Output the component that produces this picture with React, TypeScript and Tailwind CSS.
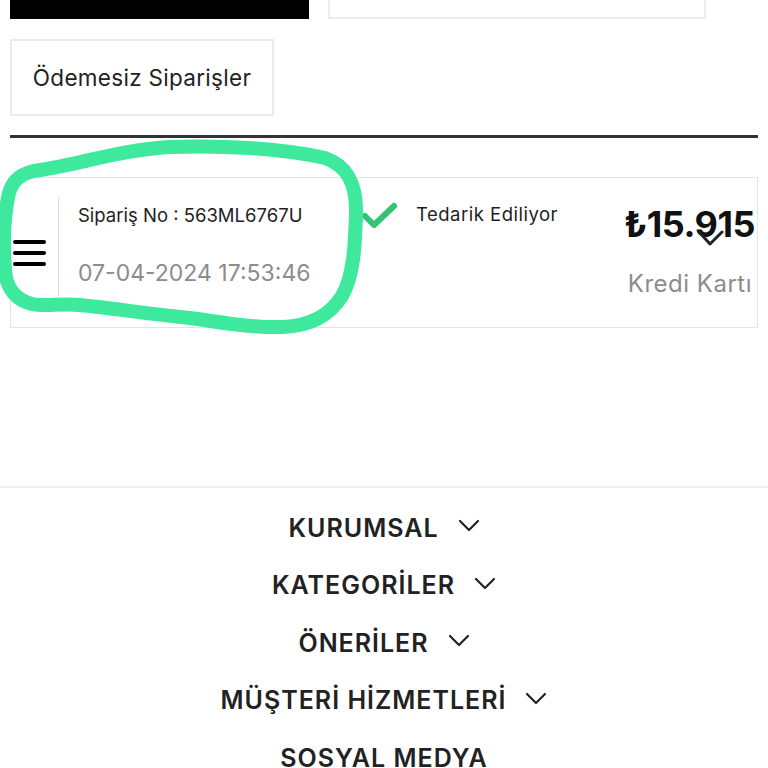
const footerLinks = ["KURUMSAL", "KATEGORİLER", "ÖNERİLER", "MÜŞTERİ HİZMETLERİ", "SOSYAL MEDYA"];

function Hamburger() {
  return (
    <div className="flex w-[33px] flex-col gap-[7px]">
      <span className="h-[4px] w-full rounded-sm bg-black" />
      <span className="h-[4px] w-full rounded-sm bg-black" />
      <span className="h-[4px] w-full rounded-sm bg-black" />
    </div>
  );
}

function Chevron() {
  return (
    <svg width="22" height="13" viewBox="0 0 22 13" className="mt-[-4px]">
      <path d="M2 2 L11 11 L20 2" fill="none" stroke="#222" strokeWidth="2.2" strokeLinecap="round" strokeLinejoin="round" />
    </svg>
  );
}

function OrderCard() {
  return (
    <div className="mx-[10px] mt-[39px] flex h-[151px] border border-[#e4e4e4] pl-[2px] pr-[2px]">
      <div className="flex items-center">
        <Hamburger />
      </div>
      <div className="ml-[12px] mt-[19px] h-[100px] w-px bg-[#dcdcdc]" />
      <div className="ml-[19px] flex w-[270px] flex-col pt-[25px]">
        <p className="text-[18.5px] leading-[24px] text-[#1e1e1e]">Sipariş No : 563ML6767U</p>
        <p className="mt-[34px] text-[23px] leading-[24px] text-[#8c8c8c]">07-04-2024 17:53:46</p>
      </div>
      <div className="ml-[13px] flex items-start pt-[24px]">
        <svg width="36" height="27" viewBox="0 0 36 27" className="mt-[0px] shrink-0">
          <path d="M4 14 L13 23 L33 4" fill="none" stroke="#34c274" strokeWidth="6" strokeLinecap="round" strokeLinejoin="round" />
        </svg>
        <p className="ml-[19px] text-[18.5px] leading-[24px] tracking-[0.5px] text-[#1e1e1e]">Tedarik Ediliyor</p>
      </div>
      <div className="ml-auto flex flex-col items-end pt-[26px]">
        <div className="relative">
          <p className="text-[36px] font-bold leading-[40px] tracking-[-0.5px] text-[#111]">₺15.915</p>
          <svg width="26" height="18" viewBox="0 0 26 18" className="absolute right-[31px] top-[26px]">
            <path d="M2 3 L12 14 L24 2" fill="none" stroke="#222" strokeWidth="3" strokeLinecap="round" strokeLinejoin="round" />
          </svg>
        </div>
        <p className="mt-[27px] pr-[3px] text-[24px] leading-[26px] tracking-[0.5px] text-[#8c8c8c]">Kredi Kartı</p>
      </div>
    </div>
  );
}

export default function App() {
  return (
    <div className="relative h-[768px] w-[768px] overflow-hidden bg-white font-['Inter',sans-serif]">
      <div className="flex px-[10px]">
        <div className="h-[19px] w-[299px] bg-black" />
        <div className="ml-[19px] h-[19px] w-[378px] border-2 border-t-0 border-[#ececec]" />
      </div>

      <button className="ml-[10px] mt-[20px] flex h-[77px] w-[264px] items-center justify-center border-2 border-[#ebebeb] text-[22.5px] tracking-[0.3px] text-[#222]">
        Ödemesiz Siparişler
      </button>

      <div className="mx-[10px] mt-[19px] h-[3px] bg-[#333]" />

      <OrderCard />

      <footer className="mt-[158px] border-t-2 border-[#f0f0f0] pt-[11px]">
        {footerLinks.map((l) => (
          <div key={l} className="flex h-[57.5px] items-center justify-center gap-[19px] text-[#222]">
            <span className="text-[25px] font-semibold leading-[30px] tracking-[1px]">{l}</span>
            {l !== "SOSYAL MEDYA" && <Chevron />}
          </div>
        ))}
      </footer>

      <svg className="pointer-events-none absolute left-0 top-0" width="768" height="768" viewBox="0 0 768 768">
        <path
          d="M32 304 C16 300 6 288 5 270 C3 245 4 215 9 193 C13 178 24 172 40 170 C80 164 120 150 170 147 C220 145 280 148 325 158 C348 166 357 185 356 215 C355 245 354 275 342 296 C330 315 310 326 283 327 C250 328 220 322 190 318 C150 314 110 308 80 305 C60 303 45 307 32 304 Z"
          fill="none"
          stroke="#3ee89d"
          strokeWidth="14"
          strokeLinecap="round"
          strokeLinejoin="round"
        />
      </svg>
    </div>
  );
}
